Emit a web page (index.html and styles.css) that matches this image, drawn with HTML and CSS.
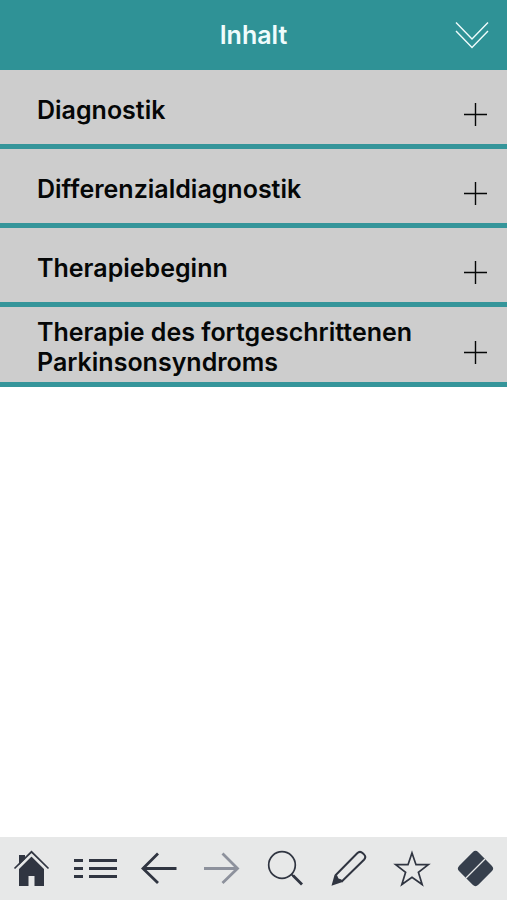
FILE: index.html
```html
<!DOCTYPE html>
<html lang="de">
<head>
<meta charset="utf-8">
<meta name="viewport" content="width=device-width, initial-scale=1">
<title>Inhalt</title>
<link rel="stylesheet" href="styles.css">
</head>
<body>
<header class="header">
  <h1 class="title">Inhalt</h1>
  <button class="expand" type="button" aria-label="Alle aufklappen">
    <svg width="34" height="28" viewBox="0 0 34 28"><path d="M1 1.5 17 18 33 1.5M1 10 17 26.500 33 10"/></svg>
  </button>
</header>
<main class="content">
  <ul class="chapters">
    <li><button class="chapter" type="button"><span class="label">Diagnostik</span><svg class="plus" width="23" height="23" viewBox="0 0 23 23"><path d="M0 11.500H23M11.500 0V23"/></svg></button></li>
    <li><button class="chapter" type="button"><span class="label">Differenzialdiagnostik</span><svg class="plus" width="23" height="23" viewBox="0 0 23 23"><path d="M0 11.500H23M11.500 0V23"/></svg></button></li>
    <li><button class="chapter" type="button"><span class="label">Therapiebeginn</span><svg class="plus" width="23" height="23" viewBox="0 0 23 23"><path d="M0 11.500H23M11.500 0V23"/></svg></button></li>
    <li><button class="chapter" type="button"><span class="label">Therapie des fortgeschrittenen Parkinsonsyndroms</span><svg class="plus" width="23" height="23" viewBox="0 0 23 23"><path d="M0 11.500H23M11.500 0V23"/></svg></button></li>
  </ul>
</main>
<nav class="toolbar">
  <button class="tool" type="button" aria-label="Startseite">
    <svg class="icon" viewBox="0 0 63 63"><path class="solid" d="M19 24V18H25V22L31.500 19 44 31V49H34.500V39H28.500V49H19Z"/><path class="halo" d="M15.500 33.500 31.500 17.500 47.500 33.500"/><path class="thin" d="M14.500 31.500 31.500 14.800 48.500 31.500"/></svg>
  </button>
  <button class="tool active" type="button" aria-label="Inhalt">
    <svg class="icon" viewBox="0 0 63 63"><path class="bar" d="M10 23.500H19M25 23.500H53M10 31.500H19M25 31.500H53M10 39.500H19M25 39.500H53"/></svg>
  </button>
  <button class="tool" type="button" aria-label="Zurück">
    <svg class="icon" viewBox="0 0 63 63"><path class="bar" d="M49.500 31.500H16M31 16.500 16 31.500 31 46"/></svg>
  </button>
  <button class="tool" type="button" aria-label="Vor" disabled>
    <svg class="icon" viewBox="0 0 63 63"><path class="bar" d="M14 31.500H47.500M32.500 16.500 47.500 31.500 32.500 46"/></svg>
  </button>
  <button class="tool" type="button" aria-label="Suche">
    <svg class="icon" viewBox="0 0 63 63"><circle class="thin" cx="28" cy="28" r="13.300"/><path class="thin" d="M37.500 37.500 40 39.500"/><path class="bar" d="M39 38.500 48 47.500"/></svg>
  </button>
  <button class="tool" type="button" aria-label="Notiz">
    <svg class="icon" viewBox="0 0 63 63"><path class="outline" d="M18.300 38.500 40.200 16.200Q43 13.600 45.800 16.200L47 17.400Q49.600 20 47 22.800L24.500 44.800"/><path class="solid" d="M14.500 48.700 17.500 38 20 38.300 21.500 41.500 24.500 42.500 25.500 45Z"/></svg>
  </button>
  <button class="tool" type="button" aria-label="Favoriten">
    <svg class="icon" viewBox="0 0 63 63"><path class="thin" d="M32 16 36 27.700H48.300L38.400 35.300 42.200 47.500 32 40.300 21.800 47.500 25.600 35.300 15.700 27.700H28Z"/></svg>
  </button>
  <button class="tool" type="button" aria-label="Radierer">
    <svg class="icon" viewBox="0 0 63 63"><rect class="eraser" x="18" y="18" width="27" height="27" rx="4" transform="rotate(45 31.500 31.500)"/><path class="cut" d="M22 41 41 22"/></svg>
  </button>
</nav>
</body>
</html>
```

FILE: styles.css
```css
* {
  box-sizing: border-box;
}

body {
  margin: 0;
  min-height: 100vh;
  display: flex;
  flex-direction: column;
  background: #fff;
  color: #050707;
  font-family: Inter, "Liberation Sans", sans-serif;
}

button {
  margin: 0;
  padding: 0;
  border: 0;
  background: none;
  color: inherit;
  font: inherit;
  cursor: pointer;
}

svg {
  display: block;
  flex: none;
  fill: none;
  stroke: currentColor;
}

.header {
  display: grid;
  grid-template-columns: 1fr auto 1fr;
  align-items: center;
  height: 70px;
  padding: 0 18px;
  background: #2f9296;
  color: #effcfc;
}

.title {
  grid-column: 2;
  margin: 0;
  font-size: 25px;
  line-height: 30px;
  font-weight: 600;
}

.expand {
  justify-self: end;
  stroke-width: 1.4;
}

.content {
  flex: 1;
}

.chapters {
  margin: 0;
  padding: 0;
  list-style: none;
}

.chapter {
  display: flex;
  align-items: center;
  justify-content: space-between;
  gap: 16px;
  width: 100%;
  min-height: 79px;
  padding: 10px 20px 5px 37px;
  border-bottom: 5px solid #35959a;
  background: #cdcdcd;
  text-align: left;
}

.label {
  font-size: 25px;
  line-height: 30px;
  font-weight: 600;
}

.plus {
  margin-top: 10px;
  stroke-width: 1.4;
}

.toolbar {
  display: grid;
  grid-template-columns: repeat(8, 1fr);
  height: 63px;
  background: #e7e8e8;
  color: #303541;
}

.tool {
  display: flex;
  justify-content: center;
  min-width: 0;
}

.tool:disabled {
  color: #8d919c;
}

.active {
  border-bottom: 4px solid #2f9296;
}

.icon {
  width: 63px;
  height: 63px;
}

.solid {
  fill: currentColor;
  stroke: none;
}

.eraser {
  fill: #363f4c;
  stroke: none;
}

.halo {
  stroke: #e7e8e8;
  stroke-width: 3;
}

.thin {
  stroke-width: 1.7;
}

.outline {
  stroke-width: 2;
}

.bar {
  stroke-width: 2.8;
}

.cut {
  stroke: #e7e8e8;
  stroke-width: 1.2;
}
```
